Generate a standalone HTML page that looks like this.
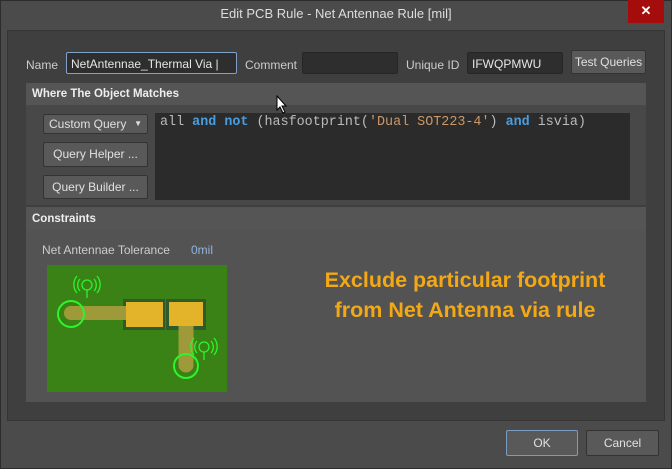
<!DOCTYPE html><html><head><style>
*{box-sizing:border-box;margin:0;padding:0}
body{width:672px;height:469px;background:#4b4b4b;font-family:"Liberation Sans",sans-serif;font-size:12px;color:#d8d8d8;position:relative;overflow:hidden}
.a{position:absolute}
.inp{position:absolute;background:#2e2e2e;border:1px solid #262626;border-radius:2px;height:22px;padding:4px 4px;color:#e6e6e6;font-size:12px}
.btn{position:absolute;background:#595959;border:1px solid #333;border-radius:2px;text-align:center;color:#e0e0e0;font-size:12px}
.hdr{position:absolute;background:#555;font-weight:bold;color:#eee;padding:5px 6px;font-size:11.5px}
</style></head><body>
<div class="a" style="left:0;top:0;width:672px;height:469px;border:1px solid #2c2c2c"></div>
<div class="a" style="left:0;top:6px;width:672px;text-align:center;font-size:13px;color:#ddd">Edit PCB Rule - Net Antennae Rule [mil]</div>
<div class="a" style="left:628px;top:0;width:36px;height:23px;background:#a50d0d;color:#fff;text-align:center;font-weight:bold;font-size:13px;line-height:22px">✕</div>
<div class="a" style="left:7px;top:30px;width:658px;height:391px;background:#3f3f3f;border:1px solid #353535"></div>
<div class="a" style="left:26px;top:58px;color:#ccc">Name</div>
<div class="inp" style="left:66px;top:52px;width:171px;border-color:#7da3c8">NetAntennae_Thermal Via |</div>
<div class="a" style="left:245px;top:58px;color:#ccc">Comment</div>
<div class="inp" style="left:302px;top:52px;width:96px"></div>
<div class="a" style="left:406px;top:58px;color:#ccc">Unique ID</div>
<div class="inp" style="left:467px;top:52px;width:96px">IFWQPMWU</div>
<div class="btn" style="left:571px;top:50px;width:75px;height:24px;line-height:22px">Test Queries</div>
<div class="hdr" style="left:26px;top:83px;width:620px;height:22px">Where The Object Matches</div>
<div class="a" style="left:26px;top:105px;width:620px;height:100px;background:#484848"></div>
<div class="btn" style="left:43px;top:114px;width:105px;height:20px;line-height:18px;text-align:left;padding-left:5px">Custom Query<span style="position:absolute;right:5px;font-size:8px">▼</span></div>
<div class="btn" style="left:43px;top:142px;width:105px;height:25px;line-height:23px">Query Helper ...</div>
<div class="btn" style="left:43px;top:175px;width:105px;height:24px;line-height:22px">Query Builder ...</div>
<div class="a" style="left:155px;top:113px;width:475px;height:87px;background:#2b2b2b;font-family:'Liberation Mono',monospace;font-size:13.4px;padding:2px 5px;color:#bbb">all <b style="color:#4a9ee0">and</b> <b style="color:#4a9ee0">not</b> (hasfootprint(<span style="color:#c9986a">'Dual SOT223-4'</span>) <b style="color:#4a9ee0">and</b> isvia)</div>
<svg class="a" style="left:276px;top:95px" width="12" height="20"><path d="M1 1 L1 15 L4 12 L7 18 L9 17 L6 11 L10 11 Z" fill="#fff" stroke="#000"/></svg>
<div class="hdr" style="left:26px;top:207px;width:620px;height:22px;padding-top:6px">Constraints</div>
<div class="a" style="left:26px;top:229px;width:620px;height:173px;background:#535353"></div>
<div class="a" style="left:42px;top:243px;color:#ccc">Net Antennae Tolerance</div>
<div class="a" style="left:191px;top:243px;color:#8fb4db">0mil</div>
<svg class="a" style="left:47px;top:265px" width="180" height="127">
<rect width="180" height="127" fill="#3a8216"/>
<rect x="76" y="34" width="42" height="31" fill="#2f5a2a"/>
<rect x="119" y="34" width="40" height="31" fill="#2f5a2a"/>
<path d="M24 48 H80" stroke="#9e9a3a" stroke-width="14" stroke-linecap="round"/>
<path d="M139 55 V100" stroke="#9e9a3a" stroke-width="15" stroke-linecap="round"/>
<rect x="79" y="37" width="37" height="25" fill="#e3b42a"/>
<rect x="122" y="37" width="34" height="24" fill="#e3b42a"/>
<circle cx="24" cy="49" r="13" fill="none" stroke="#2bf52b" stroke-width="2"/>
<circle cx="139" cy="101" r="12" fill="none" stroke="#2bf52b" stroke-width="2"/>
<g stroke="#2bf52b" fill="none" stroke-width="1.3"><circle cx="40" cy="20" r="5"/><path d="M40 25V33M33 14a9 9 0 0 0 0 12M47 14a9 9 0 0 1 0 12M30 11a13 13 0 0 0 0 17M50 11a13 13 0 0 1 0 17"/>
<circle cx="157" cy="82" r="5"/><path d="M157 87V95M150 76a9 9 0 0 0 0 12M164 76a9 9 0 0 1 0 12M147 73a13 13 0 0 0 0 17M167 73a13 13 0 0 1 0 17"/></g>
</svg>
<div class="a" style="left:290px;top:265px;width:350px;text-align:center;color:#f3a815;font-weight:bold;font-size:21.5px;line-height:30px">Exclude particular footprint<br>from Net Antenna via rule</div>
<div class="btn" style="left:506px;top:430px;width:72px;height:26px;line-height:24px;border-color:#7a9cc0">OK</div>
<div class="btn" style="left:586px;top:430px;width:73px;height:26px;line-height:24px">Cancel</div>
</body></html>
